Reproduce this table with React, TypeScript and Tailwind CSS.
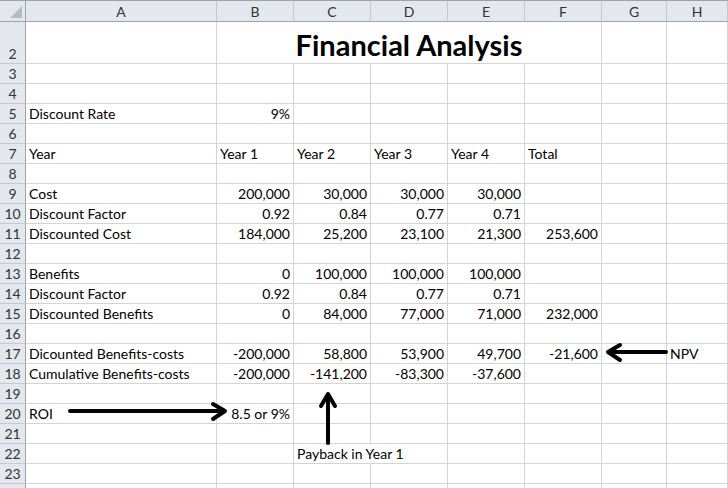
import React from "react";

type Cell = { t?: string; r?: boolean; span?: number; title?: boolean; over?: boolean };
type Row = { n: number; h: number; cells: Cell[]; hideNum?: boolean };

const cols = ["A", "B", "C", "D", "E", "F", "G", "H"];

const e: Cell = {};
const L = (t: string): Cell => ({ t });
const R = (t: string): Cell => ({ t, r: true });

const rows: Row[] = [
  { n: 2, h: 42, cells: [e, { t: "Financial Analysis", span: 5, title: true }, e, e] },
  { n: 3, h: 20, cells: [] },
  { n: 4, h: 20, cells: [] },
  { n: 5, h: 20, cells: [L("Discount Rate"), R("9%")] },
  { n: 6, h: 20, cells: [] },
  { n: 7, h: 20, cells: [L("Year"), L("Year 1"), L("Year 2"), L("Year 3"), L("Year 4"), L("Total")] },
  { n: 8, h: 20, cells: [] },
  { n: 9, h: 20, cells: [L("Cost"), R("200,000"), R("30,000"), R("30,000"), R("30,000")] },
  { n: 10, h: 20, cells: [L("Discount Factor"), R("0.92"), R("0.84"), R("0.77"), R("0.71")] },
  { n: 11, h: 20, cells: [L("Discounted Cost"), R("184,000"), R("25,200"), R("23,100"), R("21,300"), R("253,600")] },
  { n: 12, h: 20, cells: [] },
  { n: 13, h: 20, cells: [L("Benefits"), R("0"), R("100,000"), R("100,000"), R("100,000")] },
  { n: 14, h: 20, cells: [L("Discount Factor"), R("0.92"), R("0.84"), R("0.77"), R("0.71")] },
  { n: 15, h: 20, cells: [L("Discounted Benefits"), R("0"), R("84,000"), R("77,000"), R("71,000"), R("232,000")] },
  { n: 16, h: 20, cells: [] },
  { n: 17, h: 20, cells: [L("Dicounted Benefits-costs"), R("-200,000"), R("58,800"), R("53,900"), R("49,700"), R("-21,600"), e, L("NPV")] },
  { n: 18, h: 20, cells: [L("Cumulative Benefits-costs"), R("-200,000"), R("-141,200"), R("-83,300"), R("-37,600")] },
  { n: 19, h: 20, cells: [] },
  { n: 20, h: 20, cells: [L("ROI"), R("8.5 or 9%")] },
  { n: 21, h: 20, cells: [] },
  { n: 22, h: 20, cells: [e, e, { t: "Payback in Year 1", over: true }] },
  { n: 23, h: 20, cells: [] },
  // last row is only a sliver in view, so no number is drawn
  { n: 24, h: 20, cells: [], hideNum: true },
];

function fill(cells: Cell[]) {
  const out = [...cells];
  let used = out.reduce((s, c) => s + (c.span ?? 1), 0);
  while (used < 8) {
    out.push({});
    used++;
  }
  return out;
}

function SheetRow({ row }: { row: Row }) {
  const cells = fill(row.cells);
  return (
    <>
      <div
        className="flex items-end justify-center bg-[#e4e8ee] border-r border-r-[#9ea3aa] border-b border-b-[#c6cad0] text-[#333] pb-[1px]"
        style={{ height: row.h }}
      >
        {row.hideNum ? "" : row.n}
      </div>
      {cells.map((c, i) => (
        <div
          key={i}
          className={`flex items-end px-[3px] border-b border-[#d4d4d4] whitespace-nowrap ${
            c.over ? "relative z-10 overflow-visible" : "border-r overflow-hidden"
          } ${c.r ? "justify-end" : c.title ? "justify-center" : "justify-start"} ${
            c.span === 5 ? "col-span-5" : ""
          }`}
          style={{ height: row.h }}
        >
          {c.title ? (
            <span className="text-[29px] font-bold leading-[34px] pb-[1px] text-black">{c.t}</span>
          ) : (
            <span className="pb-[1px]">{c.t}</span>
          )}
        </div>
      ))}
    </>
  );
}

function Arrows() {
  return (
    <svg className="absolute inset-0 pointer-events-none" width={728} height={488}>
      <g stroke="#000" strokeWidth={4} fill="none" strokeLinecap="round" strokeLinejoin="round">
        {/* NPV */}
        <line x1={666} y1={352} x2={610} y2={352} />
        <polyline points="620,345 608,352 620,360" />
        {/* ROI */}
        <line x1={70} y1={411} x2={223} y2={411} />
        <polyline points="213,404 225,411 213,419" />
        {/* Payback */}
        <line x1={328} y1={443} x2={328} y2={397} />
        <polyline points="321,406 328,394 335,406" />
      </g>
    </svg>
  );
}

export default function App() {
  return (
    <div
      className="relative w-[728px] h-[488px] overflow-hidden bg-white text-[14px] leading-[17px] text-black"
      style={{ fontFamily: "Lato, 'Open Sans', sans-serif" }}
    >
      <div className="grid grid-cols-[26px_191px_77px_77px_77px_77px_77px_65px_1fr]">
        <div className="h-[22px] bg-[#e4e8ee] border-t border-t-[#9ea3aa] border-b border-b-[#9ea3aa] border-r border-r-[#9ea3aa] flex items-end justify-end p-[3px]">
          <svg width={12} height={12}>
            <polygon points="12,0 12,12 0,12" fill="#b6bbc2" />
          </svg>
        </div>
        {cols.map((c) => (
          <div
            key={c}
            className="h-[22px] bg-[#e4e8ee] border-t border-t-[#9ea3aa] border-b border-b-[#9ea3aa] border-r border-r-[#c6cad0] flex items-center justify-center text-[#333]"
          >
            {c}
          </div>
        ))}
        {rows.map((r) => (
          <SheetRow key={r.n} row={r} />
        ))}
      </div>
      <Arrows />
    </div>
  );
}
